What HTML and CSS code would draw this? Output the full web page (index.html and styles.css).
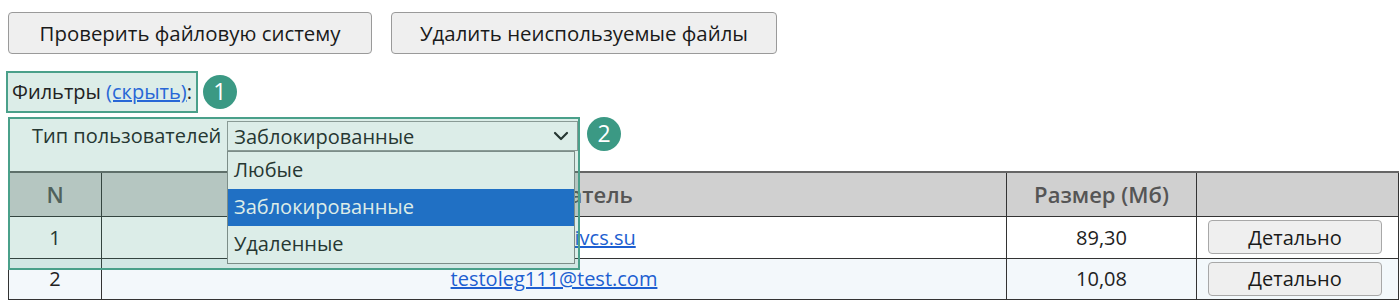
FILE: index.html
```html
<!DOCTYPE html>
<html lang="ru">
<head>
<meta charset="utf-8">
<title>Файлы</title>
<link rel="stylesheet" href="styles.css">
</head>
<body>
<div class="page">
  <div class="toolbar">
    <button class="btn btn-check">Проверить файловую систему</button>
    <button class="btn btn-clean">Удалить неиспользуемые файлы</button>
  </div>

  <div class="filters-title">
    <span class="hl hl1">Фильтры&nbsp;<a href="#">(скрыть)</a>:</span>
    <span class="badge badge1">1</span>
  </div>

  <div class="filters-area">
    <div class="filter-row">
      <span class="filter-label">Тип пользователей</span>
      <div class="select">
        <span class="select-value">Заблокированные</span>
        <svg class="chevron" width="16" height="10" viewBox="0 0 16 10"><path d="M2 2 L8 8 L14 2" fill="none" stroke="#222" stroke-width="2.2" stroke-linecap="round" stroke-linejoin="round"/></svg>
      </div>
    </div>

    <table class="files">
      <colgroup>
        <col class="c-n"><col class="c-user"><col class="c-size"><col class="c-act">
      </colgroup>
      <thead>
        <tr><th>N</th><th>Пользователь</th><th>Размер (Мб)</th><th></th></tr>
      </thead>
      <tbody>
        <tr class="r1"><td class="n">1</td><td class="user"><a href="#">blocked1@ivcs.su</a></td><td class="size">89,30</td><td class="act"><button class="btn-small">Детально</button></td></tr>
        <tr class="r2"><td class="n">2</td><td class="user"><a href="#">testoleg111@test.com</a></td><td class="size">10,08</td><td class="act"><button class="btn-small">Детально</button></td></tr>
      </tbody>
    </table>

    <div class="dropdown">
      <div class="opt">Любые</div>
      <div class="opt opt-selected">Заблокированные</div>
      <div class="opt">Удаленные</div>
    </div>
    <div class="hl hl2"></div>
    <span class="badge badge2">2</span>
  </div>
</div>
</body>
</html>
```
FILE: styles.css
```css
* { box-sizing: border-box; }
html, body { margin: 0; padding: 0; background: #fff; }
body {
  font-family: "Open Sans", "Noto Sans", sans-serif;
  font-size: 20px;
  color: #222;
  overflow: hidden;
}
.page { padding: 12px 2px 0 8px; }

.toolbar { display: flex; gap: 19px; height: 42px; }
.btn {
  font-family: inherit;
  font-size: 20.4px;
  color: #1a1a1a;
  background: #efefef;
  border: 1px solid #9a9a9a;
  border-radius: 4px;
  height: 42px;
  padding: 0;
}
.btn-check { width: 364px; }
.btn-clean { width: 386px; }

.filters-title {
  margin-top: 17px;
  display: flex;
  align-items: center;
  gap: 5px;
  height: 42px;
}
.hl {
  border: 2px solid #4aa08a;
  background: rgba(60, 155, 127, 0.18);
}
.hl1 {
  margin-left: -2px;
  height: 42px;
  display: inline-flex;
  align-items: center;
  padding: 0 4px 2px 4px;
}
.hl1 a { color: #2867d6; text-decoration: underline; }

.badge {
  width: 34px;
  height: 34px;
  border-radius: 50%;
  background: #3b9984;
  color: #fff;
  font-size: 23px;
  display: inline-flex;
  align-items: center;
  justify-content: center;
  line-height: 1;
  padding-bottom: 2px;
}

.filters-area { position: relative; margin-top: 4px; }
.filter-row {
  display: flex;
  align-items: center;
  gap: 6px;
  padding: 4px 0 20px 24px;
}
.filter-label { line-height: 30px; }
.select {
  width: 351px;
  height: 30px;
  border: 1px solid #9a9a9a;
  background: #fff;
  display: flex;
  align-items: center;
  justify-content: space-between;
  padding: 0 8px 0 6px;
}
.chevron { display: block; }

.files {
  width: 1390px;
  border-collapse: collapse;
  table-layout: fixed;
}
.c-n { width: 93px; }
.c-user { width: 905px; }
.c-size { width: 190px; }
.c-act { width: 202px; }
.files th, .files td {
  border: 1px solid #333;
  text-align: center;
  padding: 0;
}
.files thead tr { border-top: 2px solid #666; }
.files th {
  background: #d0d0d0;
  color: #555;
  font-weight: 600;
  font-size: 22px;
  height: 44px;
}
.files td { height: 42px; }
.r2 td { background: #f3f8fb; height: 41px; }
.user a { color: #1d5fd1; text-decoration: underline; }
.btn-small {
  display: block;
  width: 174px;
  height: 34px;
  font-family: inherit;
  font-size: 20px;
  color: #1a1a1a;
  background: #efefef;
  border: 1px solid #a8a8a8;
  border-radius: 4px;
  padding: 0;
}
.files td.act { padding: 0 0 0 11px; }

.dropdown {
  position: absolute;
  left: 219px;
  top: 34px;
  width: 348px;
  height: 113px;
  background: #fff;
  border: 1px solid #8a8a8a;
}
.opt {
  height: 37px;
  line-height: 36px;
  padding-left: 6px;
}
.opt-selected { background: #1a67d3; color: #fff; }

.hl2 {
  position: absolute;
  left: 0;
  top: 0;
  width: 572px;
  height: 153px;
  pointer-events: none;
}
.badge2 {
  position: absolute;
  left: 579px;
  top: 0;
}
```
